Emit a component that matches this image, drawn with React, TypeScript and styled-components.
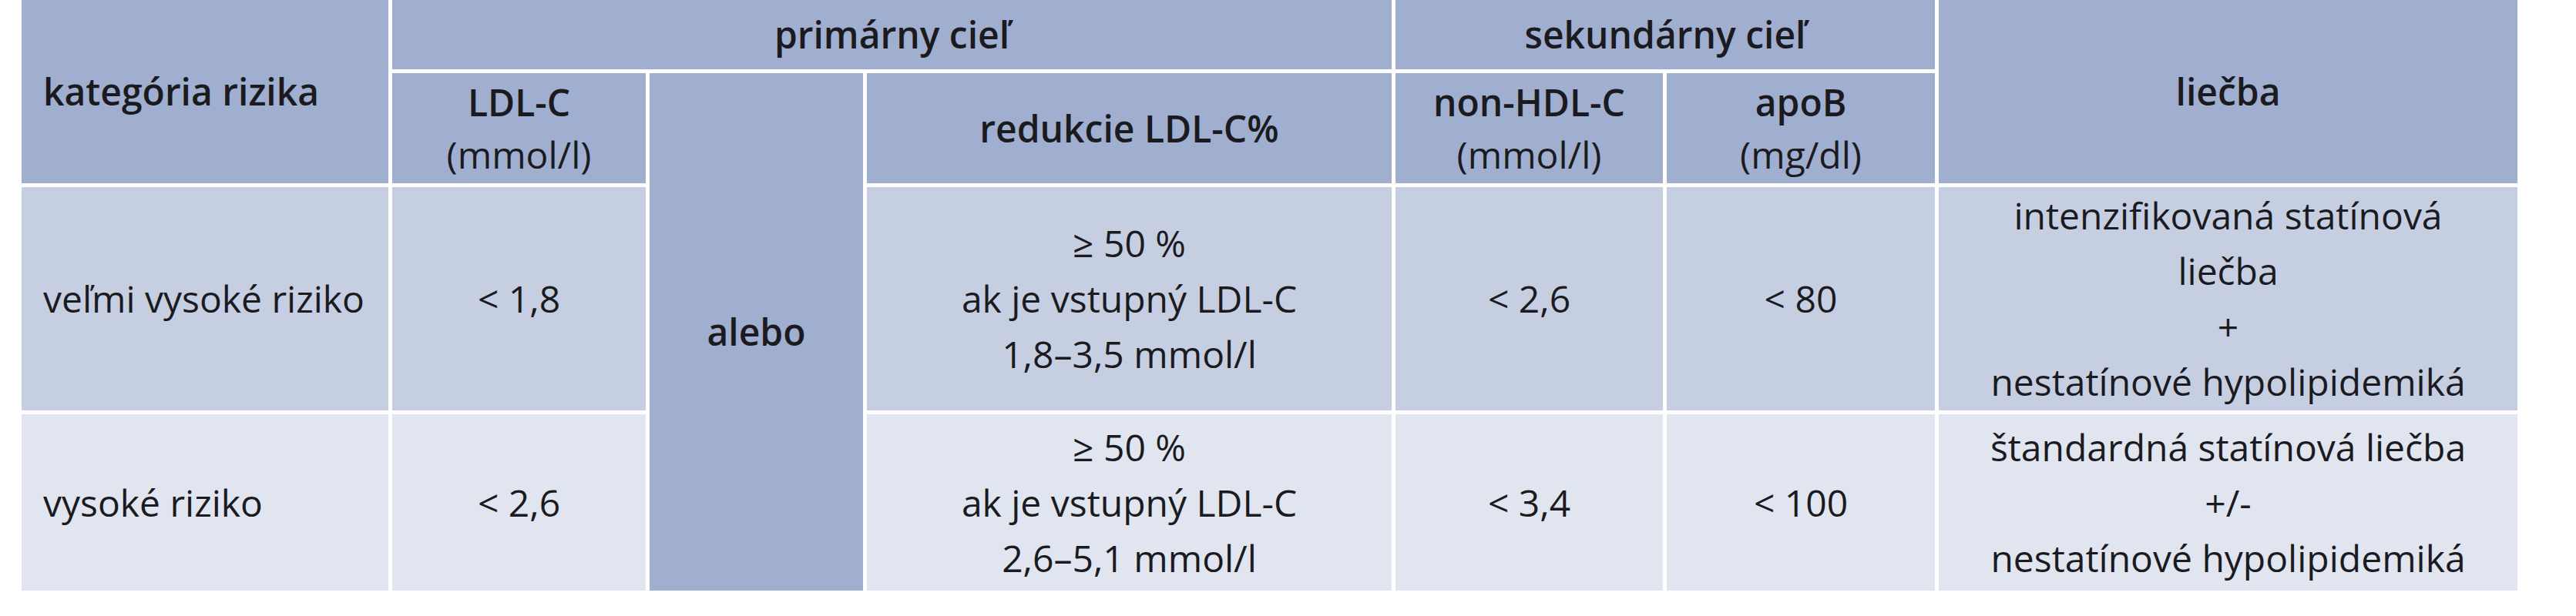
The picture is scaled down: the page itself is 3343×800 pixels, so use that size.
import React from "react";
import styled, { createGlobalStyle, css } from "styled-components";

const GlobalStyle = createGlobalStyle`
  html, body {
    margin: 0;
    padding: 0;
    background: #ffffff;
  }
  body {
    font-family: "Open Sans", "Noto Sans", "DejaVu Sans", sans-serif;
    color: #1b1b1f;
  }
`;

const Page = styled.div`
  padding: 0 0 0 28px;
`;

const Grid = styled.div`
  display: grid;
  grid-template-columns: 476px 329px 277px 681px 347px 348px 751px;
  grid-template-rows: 90px 143px 290px 229px;
  gap: 5px;
  width: max-content;
`;

type Tone = "head" | "odd" | "even";

const toneColor: Record<Tone, string> = {
  head: "#a0afcf",
  odd: "#c6cee2",
  even: "#e0e5f0",
};

interface CellProps {
  $col: number;
  $row: number;
  $colSpan?: number;
  $rowSpan?: number;
  $tone: Tone;
  $left?: boolean;
}

const Cell = styled.div<CellProps>`
  grid-column: ${(p) => p.$col} / span ${(p) => p.$colSpan ?? 1};
  grid-row: ${(p) => p.$row} / span ${(p) => p.$rowSpan ?? 1};
  background: ${(p) => toneColor[p.$tone]};
  display: flex;
  flex-direction: column;
  justify-content: center;
  font-size: 48px;
  white-space: nowrap;
  ${(p) =>
    p.$left
      ? css`
          align-items: flex-start;
          text-align: left;
          padding-left: 28px;
        `
      : css`
          align-items: center;
          text-align: center;
        `}
`;

const HeadCell = styled(Cell)`
  font-weight: 600;
  line-height: 68px;
`;

const BodyCell = styled(Cell)`
  font-weight: 400;
  line-height: 72px;
`;

const Line = styled.span<{ $light?: boolean }>`
  display: block;
  ${(p) => p.$light && "font-weight: 400;"}
`;

const rows = [
  {
    tone: "odd" as Tone,
    risk: "veľmi vysoké riziko",
    ldl: "< 1,8",
    reduction: ["≥ 50 %", "ak je vstupný LDL-C", "1,8–3,5 mmol/l"],
    nonHdl: "< 2,6",
    apoB: "< 80",
    therapy: [
      "intenzifikovaná statínová",
      "liečba",
      "+",
      "nestatínové hypolipidemiká",
    ],
  },
  {
    tone: "even" as Tone,
    risk: "vysoké riziko",
    ldl: "< 2,6",
    reduction: ["≥ 50 %", "ak je vstupný LDL-C", "2,6–5,1 mmol/l"],
    nonHdl: "< 3,4",
    apoB: "< 100",
    therapy: [
      "štandardná statínová liečba",
      "+/-",
      "nestatínové hypolipidemiká",
    ],
  },
];

export default function App() {
  return (
    <>
      <GlobalStyle />
      <Page>
        <Grid role="table">
          <HeadCell $col={1} $row={1} $rowSpan={2} $tone="head" $left>
            <Line>kategória rizika</Line>
          </HeadCell>
          <HeadCell $col={2} $row={1} $colSpan={3} $tone="head">
            <Line>primárny cieľ</Line>
          </HeadCell>
          <HeadCell $col={5} $row={1} $colSpan={2} $tone="head">
            <Line>sekundárny cieľ</Line>
          </HeadCell>
          <HeadCell $col={7} $row={1} $rowSpan={2} $tone="head">
            <Line>liečba</Line>
          </HeadCell>

          <HeadCell $col={2} $row={2} $tone="head">
            <Line>LDL-C</Line>
            <Line $light>(mmol/l)</Line>
          </HeadCell>
          <HeadCell $col={3} $row={2} $rowSpan={3} $tone="head">
            <Line>alebo</Line>
          </HeadCell>
          <HeadCell $col={4} $row={2} $tone="head">
            <Line>redukcie LDL-C%</Line>
          </HeadCell>
          <HeadCell $col={5} $row={2} $tone="head">
            <Line>non-HDL-C</Line>
            <Line $light>(mmol/l)</Line>
          </HeadCell>
          <HeadCell $col={6} $row={2} $tone="head">
            <Line>apoB</Line>
            <Line $light>(mg/dl)</Line>
          </HeadCell>

          {rows.map((r, i) => {
            const row = i + 3;
            return (
              <React.Fragment key={r.risk}>
                <BodyCell $col={1} $row={row} $tone={r.tone} $left>
                  <Line>{r.risk}</Line>
                </BodyCell>
                <BodyCell $col={2} $row={row} $tone={r.tone}>
                  <Line>{r.ldl}</Line>
                </BodyCell>
                <BodyCell $col={4} $row={row} $tone={r.tone}>
                  {r.reduction.map((t) => (
                    <Line key={t}>{t}</Line>
                  ))}
                </BodyCell>
                <BodyCell $col={5} $row={row} $tone={r.tone}>
                  <Line>{r.nonHdl}</Line>
                </BodyCell>
                <BodyCell $col={6} $row={row} $tone={r.tone}>
                  <Line>{r.apoB}</Line>
                </BodyCell>
                <BodyCell $col={7} $row={row} $tone={r.tone}>
                  {r.therapy.map((t) => (
                    <Line key={t}>{t}</Line>
                  ))}
                </BodyCell>
              </React.Fragment>
            );
          })}
        </Grid>
      </Page>
    </>
  );
}
